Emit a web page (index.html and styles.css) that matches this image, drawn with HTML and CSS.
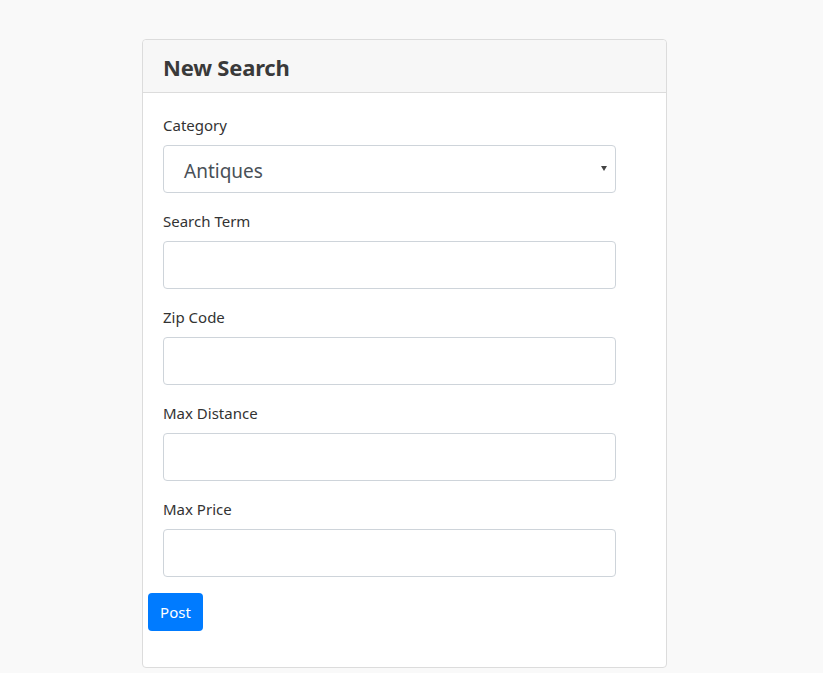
FILE: index.html
```html
<!DOCTYPE html>
<html>
<head>
<meta charset="utf-8">
<link rel="stylesheet" href="styles.css">
</head>
<body>
<div class="card">
  <div class="card-header"><h2>New Search</h2></div>
  <form class="card-body">
    <div class="group">
      <label>Category</label>
      <div class="select">
        <span>Antiques</span>
        <svg class="caret" width="6" height="5" viewBox="0 0 6 5"><path d="M0 0H6L3 5Z" fill="#444"/></svg>
      </div>
    </div>
    <div class="group">
      <label>Search Term</label>
      <input class="field" type="text">
    </div>
    <div class="group">
      <label>Zip Code</label>
      <input class="field" type="text">
    </div>
    <div class="group">
      <label>Max Distance</label>
      <input class="field" type="text">
    </div>
    <div class="group">
      <label>Max Price</label>
      <input class="field" type="text">
    </div>
    <button class="btn" type="button">Post</button>
  </form>
</div>
</body>
</html>
```
FILE: styles.css
```css
html, body {
  margin: 0;
  padding: 0;
  background: #f9f9f9;
  font-family: "Noto Sans", "Open Sans", sans-serif;
  color: #333;
}
body {
  padding-top: 39px;
  padding-left: 142px;
}
.card {
  width: 525px;
  height: 629px;
  background: #fff;
  border: 1px solid #dcdcdc;
  border-radius: 4px;
  box-sizing: border-box;
}
.card-header {
  height: 53px;
  box-sizing: border-box;
  background: #f7f7f7;
  border-bottom: 1px solid #dcdcdc;
  padding: 0 20px;
  display: flex;
  align-items: center;
  border-radius: 4px 4px 0 0;
}
.card-header h2 {
  margin: 0;
  margin-top: 2px;
  font-size: 22px;
  font-weight: 700;
  color: #3a3a3a;
  letter-spacing: -0.2px;
}
.card-body {
  padding: 20px 50px 0 20px;
  display: flex;
  flex-direction: column;
}
.group {
  display: flex;
  flex-direction: column;
  margin-bottom: 16px;
}
label {
  font-size: 15px;
  line-height: 24px;
  margin-bottom: 8px;
  color: #333;
}
.field, .select {
  height: 48px;
  width: 453px;
  box-sizing: border-box;
  border: 1px solid #ced4da;
  border-radius: 4px;
  background: #fff;
  font: inherit;
  padding: 0 20px;
}
.select {
  display: flex;
  align-items: center;
  justify-content: space-between;
  padding: 0 8px 0 20px;
}
.select span {
  font-size: 19px;
  color: #495057;
  margin-top: 3px;
}
.caret {
  margin-top: -2px;
}
.btn {
  align-self: flex-start;
  margin-left: -15px;
  height: 38px;
  width: 55px;
  border: none;
  border-radius: 4px;
  background: #007bff;
  color: #fff;
  font-family: inherit;
  font-size: 15px;
  padding: 0;
}
```
